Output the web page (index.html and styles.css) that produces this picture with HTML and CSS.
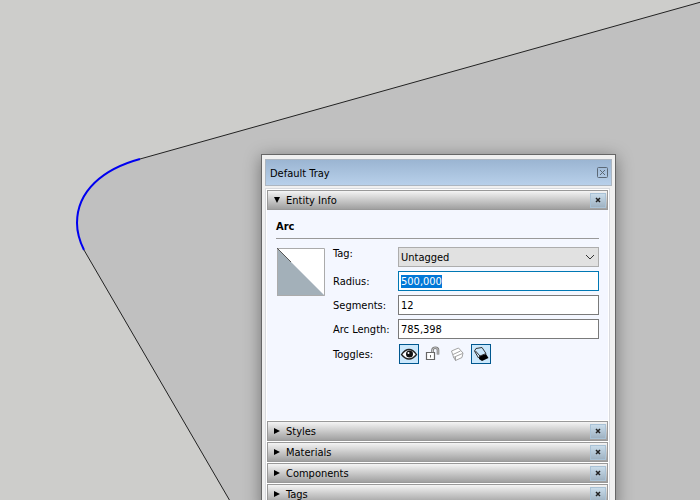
FILE: index.html
```html
<!DOCTYPE html>
<html lang="en">
<head>
<meta charset="utf-8">
<title>Default Tray</title>
<link rel="stylesheet" href="styles.css">
</head>
<body>
<main class="viewport">
<svg class="model" viewBox="0 0 700 500" preserveAspectRatio="xMinYMin slice" aria-hidden="true">
  <path class="face" d="M701 2 L140 159 C103 169 77 191 77 223 Q77 236 84 250 L230 501 L701 501 Z"/>
  <path class="edge" d="M701 2 L140 159 M84 250 L230 501"/>
  <path class="arc" d="M140 159 C103 169 77 191 77 223 Q77 236 84 250"/>
</svg>

<section class="tray">
  <header class="tray-title">
    <h1>Default Tray</h1>
    <button class="tray-close" type="button" aria-label="Close tray">
      <svg width="11" height="11" viewBox="0 0 11 11"><rect x=".5" y=".5" width="10" height="10" rx="1"/><path d="M3 3l5 5M8 3l-5 5"/></svg>
    </button>
  </header>

  <div class="panels">
    <section class="panel">
      <div class="panel-head">
        <button class="panel-toggle" type="button" aria-expanded="true"><svg width="8" height="8" viewBox="0 0 8 8"><path d="M1 1h6L4 7z"/></svg><span>Entity Info</span></button>
        <button class="panel-close" type="button" aria-label="Close Entity Info"><svg width="6" height="6" viewBox="0 0 6 6"><path d="M1 1l4 4M5 1l-4 4"/></svg></button>
      </div>
      <form class="entity">
        <h2>Arc</h2>
        <div class="entity-body">
          <svg class="swatch" width="48" height="48" viewBox="0 0 48 48" role="img" aria-label="Material">
            <path fill="#fff" d="M0 0h48v48z"/>
            <path fill="#a3b0b9" d="M0 0v48h48z"/>
            <path fill="none" stroke="#ababab" d="M.5.5h47v47H.5z"/>
            <path fill="none" stroke="#555" d="M0 0l14 14"/>
          </svg>
          <div class="fields">
            <label class="tag-label" for="tag">Tag:</label>
            <div class="select">
              <select id="tag"><option>Untagged</option></select>
              <svg class="chevron" width="10" height="6" viewBox="0 0 10 6"><path d="M1 1l4 4 4-4"/></svg>
            </div>
            <label for="radius">Radius:</label>
            <input id="radius" type="text" value="500,000">
            <label for="segments">Segments:</label>
            <input id="segments" type="text" value="12">
            <label for="length">Arc Length:</label>
            <input id="length" type="text" value="785,398">
            <span id="toggles">Toggles:</span>
            <div class="toggles" role="group" aria-labelledby="toggles">
              <button class="on" type="button" aria-label="Hide" aria-pressed="true">
                <svg width="18" height="18" viewBox="0 0 18 18"><path fill="#fff" stroke="#222" stroke-width="1.300" d="M1.500 9.500Q5 4.500 9 4.500T16.500 9.500Q13 14 9 14T1.500 9.500z"/><circle cx="9.500" cy="9" r="3.500" fill="#111"/><circle cx="8.500" cy="8" r="1" fill="#fff"/></svg>
              </button>
              <button type="button" aria-label="Lock" aria-pressed="false">
                <svg width="18" height="18" viewBox="0 0 18 18"><path fill="#fff" stroke="#666" stroke-width="1.200" d="M2.500 7.500h8v7h-8z"/><path fill="none" stroke="#777" stroke-width="2.600" d="M8.500 7.500V5C8.500 2 14 2 14 5v4.500"/><path fill="none" stroke="#ddd" stroke-width=".8" d="M8.500 7V5C8.500 2 14 2 14 5v4"/><path stroke="#666" d="M6.500 10v2.500"/></svg>
              </button>
              <button type="button" aria-label="Receive shadows" aria-pressed="false">
                <svg width="18" height="18" viewBox="0 0 18 18"><path fill="#fff" stroke="#999" stroke-width=".9" d="M3.500 6L10.500 3 15 8 14 12.500 7.500 15.500 5.500 12zM5 9.500L12.500 6M5.500 12.500l2-1 7-3M7.500 11.500v4"/></svg>
              </button>
              <button class="on" type="button" aria-label="Cast shadows" aria-pressed="true">
                <svg width="18" height="18" viewBox="0 0 18 18"><path fill="#000" d="M7 11l7-2 2.500 4-6.500 3-3-2z"/><path fill="#cbe8fc" stroke="#333" d="M2.500 6L4 3.500 10 2.500 14 8.500 8 11 6.500 13zM8 11l-4.500-5"/></svg>
              </button>
            </div>
          </div>
        </div>
      </form>
    </section>

    <div class="panel-head">
      <button class="panel-toggle" type="button" aria-expanded="false"><svg width="8" height="8" viewBox="0 0 8 8"><path d="M1 1v6l6-3z"/></svg><span>Styles</span></button>
      <button class="panel-close" type="button" aria-label="Close Styles"><svg width="6" height="6" viewBox="0 0 6 6"><path d="M1 1l4 4M5 1l-4 4"/></svg></button>
    </div>
    <div class="panel-head">
      <button class="panel-toggle" type="button" aria-expanded="false"><svg width="8" height="8" viewBox="0 0 8 8"><path d="M1 1v6l6-3z"/></svg><span>Materials</span></button>
      <button class="panel-close" type="button" aria-label="Close Materials"><svg width="6" height="6" viewBox="0 0 6 6"><path d="M1 1l4 4M5 1l-4 4"/></svg></button>
    </div>
    <div class="panel-head">
      <button class="panel-toggle" type="button" aria-expanded="false"><svg width="8" height="8" viewBox="0 0 8 8"><path d="M1 1v6l6-3z"/></svg><span>Components</span></button>
      <button class="panel-close" type="button" aria-label="Close Components"><svg width="6" height="6" viewBox="0 0 6 6"><path d="M1 1l4 4M5 1l-4 4"/></svg></button>
    </div>
    <div class="panel-head">
      <button class="panel-toggle" type="button" aria-expanded="false"><svg width="8" height="8" viewBox="0 0 8 8"><path d="M1 1v6l6-3z"/></svg><span>Tags</span></button>
      <button class="panel-close" type="button" aria-label="Close Tags"><svg width="6" height="6" viewBox="0 0 6 6"><path d="M1 1l4 4M5 1l-4 4"/></svg></button>
    </div>
  </div>
</section>
</main>
<script src="script.js"></script>
</body>
</html>
```
FILE: styles.css
```css
* {
  box-sizing: border-box;
}

body {
  margin: 0;
  font-family: Tahoma, "DejaVu Sans Condensed", "DejaVu Sans", sans-serif;
  font-size: 11px;
  line-height: 14px;
  color: #000;
}

button, input, select {
  font: inherit;
  color: inherit;
  margin: 0;
  padding: 0;
}

button {
  border: 0;
  background: none;
}

svg {
  display: block;
}

h1, h2 {
  margin: 0;
  font-size: 11px;
}

/* drawing area */
.viewport {
  position: relative;
  height: 100vh;
  overflow: hidden;
  background: #cdcdcb;
}

.model {
  width: 100%;
  height: 100%;
}

.face {
  fill: #c0c0c0;
}

.edge {
  fill: none;
  stroke: #222;
  stroke-width: 1;
}

.arc {
  fill: none;
  stroke: #0000f0;
  stroke-width: 2;
}

/* floating tray */
.tray {
  position: absolute;
  top: 154px;
  left: 261px;
  right: 84px;
  padding: 4px 3px;
  border: 1px solid #666;
  background: #f0f0f0;
  box-shadow: 0 3px 16px rgba(0, 0, 0, 0.4);
}

.tray-title {
  display: flex;
  align-items: center;
  justify-content: space-between;
  height: 27px;
  padding: 0 3px 0 4px;
  border: 1px solid #adb6c0;
  background: linear-gradient(#9bb5d2, #b8d0ea);
}

.tray-title h1 {
  padding-top: 2px;
  font-weight: normal;
}

.tray-close svg {
  fill: none;
  stroke: #5c6976;
}

.panels {
  display: flex;
  flex-direction: column;
  gap: 1px;
  margin: 2px 2px 0 0;
  padding: 1px;
  border: 1px solid #d8dade;
  background: #fff;
}

.panel-head {
  display: flex;
  align-items: center;
  height: 20px;
  padding: 0 1px 0 5px;
  border: 1px solid #999;
  background: linear-gradient(#f4f4f4, #a0a0a0);
}

.panel-toggle {
  display: flex;
  flex: 1;
  align-items: center;
  gap: 5px;
  text-align: left;
}

.panel-toggle span {
  padding-top: 2px;
}

.panel-close {
  display: flex;
  align-items: center;
  justify-content: center;
  width: 16px;
  height: 15px;
  border: 1px solid #a9c2d6;
  background: linear-gradient(#c9dcea, #9fb2c2);
}

.panel-close svg {
  fill: none;
  stroke: #222;
  stroke-width: 1.5;
}

/* entity info */
.entity {
  padding: 10px 9px 56px;
  background: #f4f7ff;
}

.entity h2 {
  padding-bottom: 4px;
  border-bottom: 1px solid #999;
}

.entity-body {
  display: flex;
  align-items: flex-start;
  gap: 8px;
  padding: 8px 0 0 1px;
}

.swatch {
  flex: none;
  margin-top: 1px;
}

.fields {
  display: grid;
  flex: 1;
  grid-template-columns: 61px 1fr;
  grid-template-rows: repeat(4, 20px) 21px;
  align-items: center;
  gap: 4px;
}

.fields label, .fields span {
  padding-top: 2px;
}

.fields .tag-label {
  align-self: start;
  padding-top: 0;
}

.fields input, .fields select {
  display: block;
  width: 100%;
  height: 20px;
  padding: 1px 2px 0;
  border: 1px solid #7a7a7a;
  border-radius: 0;
  background: #fff;
  outline: 0;
}

.fields input:focus {
  border-color: #0078b4;
}

.fields input::selection {
  background: #0078d7;
  color: #fff;
}

.select {
  display: grid;
  align-items: center;
}

.fields .select select {
  grid-area: 1 / 1;
  padding-top: 2px;
  border-color: #adadad;
  background: #e1e1e1;
  appearance: none;
}

.chevron {
  grid-area: 1 / 1;
  justify-self: end;
  margin-right: 4px;
  fill: none;
  stroke: #333;
  pointer-events: none;
}

.toggles {
  display: flex;
  align-self: end;
  gap: 4px;
  padding-left: 1px;
}

.toggles button {
  width: 20px;
  height: 20px;
  border: 1px solid transparent;
}

.toggles .on {
  border-color: #00578f;
  background: #cbe8fc;
}
```
FILE: script.js
```js
var radius = document.getElementById("radius");
radius.focus();
radius.select();
```
